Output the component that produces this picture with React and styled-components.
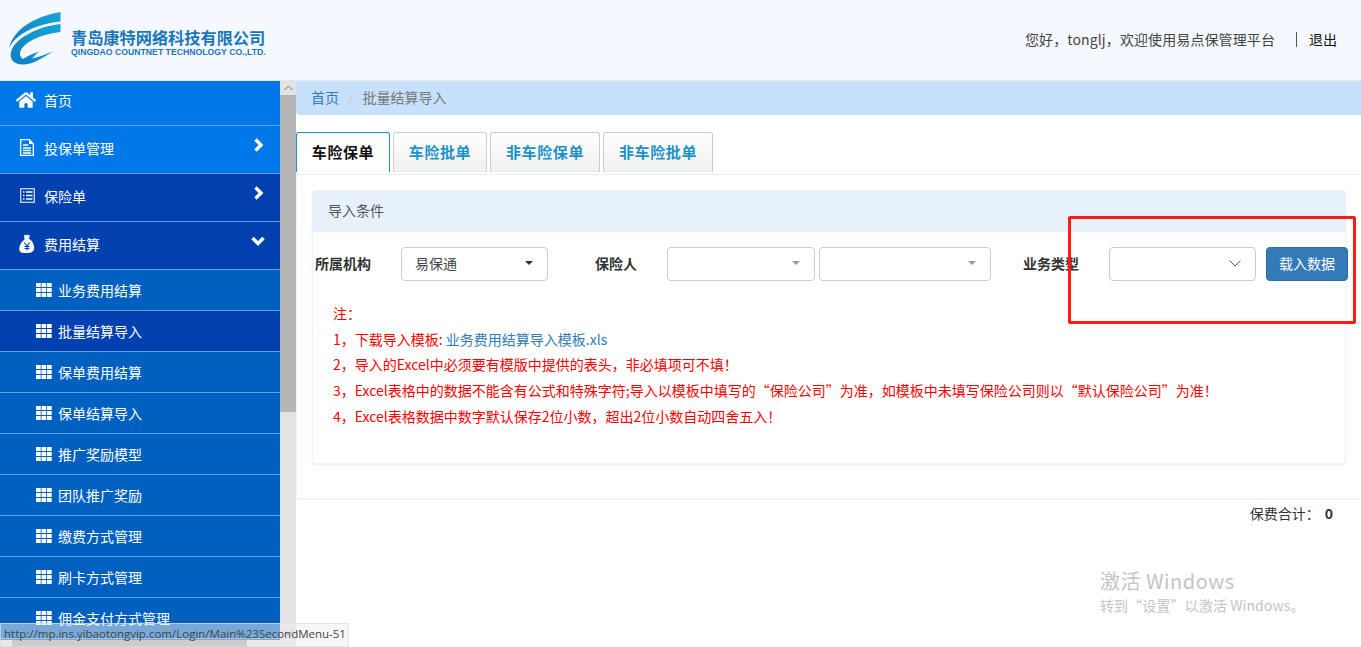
import React from 'react';
import styled, { createGlobalStyle } from 'styled-components';
import { FaHome } from 'react-icons/fa';

const GlobalStyle = createGlobalStyle`
  html, body {
    margin: 0;
    padding: 0;
    height: 100%;
    overflow: hidden;
    background: #fff;
  }
  * {
    box-sizing: border-box;
  }
  body {
    font-family: "Noto Sans CJK SC", "Open Sans", sans-serif;
    font-size: 14px;
    color: #333;
  }
`

const Page = styled.div`
  position: relative;
  width: 1361px;
  height: 647px;
  overflow: hidden;
  display: flex;
  flex-direction: column;
`

const Header = styled.header`
  flex: 0 0 81px;
  display: flex;
  align-items: center;
  justify-content: space-between;
  padding: 0 24px 2px 9px;
  background: #f5f9ff;
  border-bottom: 1px solid #e4e8ee;
`

const Brand = styled.div`
  display: flex;
  align-items: center;
  gap: 10px;
`

const BrandText = styled.div`
  display: flex;
  flex-direction: column;
  margin-top: 7px;
  color: #1a76ba;
`

const BrandName = styled.div`
  font-size: 16.2px;
  line-height: 20px;
  font-weight: 700;
  white-space: nowrap;
`

const BrandSub = styled.div`
  font-family: "Liberation Sans", sans-serif;
  font-size: 8.7px;
  line-height: 11px;
  font-weight: 700;
  white-space: nowrap;
`

const UserBar = styled.div`
  display: flex;
  align-items: center;
  font-size: 14px;
  color: #444;
`

const UserGreeting = styled.span`
  letter-spacing: .1px;
`

const Divider = styled.span`
  width: 1px;
  height: 15px;
  margin: 0 12px 0 21px;
  background: #555;
`

const Logout = styled.a`
  color: #111;
`

const Body = styled.div`
  flex: 1;
  display: flex;
  min-height: 0;
`

const SideColumn = styled.div`
  flex: 0 0 296px;
  display: flex;
  flex-direction: column;
`

const SideTop = styled.div`
  flex: 1;
  display: flex;
  min-height: 0;
`

const Sidebar = styled.nav`
  flex: 0 0 280px;
  overflow: hidden;
  background: #0060bf;
`

const MenuRow = styled.div`
  height: ${p => p.$short ? '45px' : '48px'};
  display: flex;
  align-items: center;
  padding: ${p => p.$short ? '0 0 7px 16px' : '0 0 4px 19px'};
  gap: ${p => p.$short ? '8px' : '9px'};
  color: #fff;
  font-size: 14px;
  background: ${p => p.$dark ? '#0041af' : '#0078e8'};
  border-bottom: 1px solid #5b9fe6;
`

const MenuIcon = styled.span`
  display: flex;
  width: ${p => p.$w || 16}px;
  justify-content: center;
`

const MenuLabel = styled.span`
  flex: 1;
`

const Arrow = styled.span`
  display: flex;
  width: 14px;
  justify-content: center;
  margin: 0 15px 6px 0;
`

const SubRow = styled.div`
  height: 41px;
  display: flex;
  align-items: center;
  gap: 6px;
  padding-left: 36px;
  color: #fff;
  font-size: 14px;
  background: ${p => p.$active ? '#0041af' : '#0060bf'};
  border-bottom: 1px solid #5b9fe6;
`

const ScrollTrack = styled.div`
  flex: 0 0 16px;
  display: flex;
  flex-direction: column;
  background: #e3e3e3;
`

const ScrollButton = styled.div`
  flex: 0 0 14px;
  display: flex;
  align-items: center;
  justify-content: center;
`

const ScrollThumb = styled.div`
  flex: 0 0 317px;
  background: #b6b6b6;
`

const ScrollRest = styled.div`
  flex: 1;
`

const HScroll = styled.div`
  flex: 0 0 7px;
  display: flex;
  background: #e3e3e3;
`

const HThumb = styled.div`
  width: 235px;
  margin-left: 12px;
  background: #a9a9a9;
`

const Main = styled.main`
  flex: 1;
  min-width: 0;
  display: flex;
  flex-direction: column;
`

const Breadcrumb = styled.div`
  flex: 0 0 34px;
  display: flex;
  align-items: center;
  padding: 0 15px 3px;
  background: #c7e1fd;
  border-radius: 0 0 0 4px;
  font-size: 14px;
`

const CrumbLink = styled.a`
  color: #337ab7;
`

const CrumbSep = styled.span`
  margin: 0 9px;
  color: #ccc;
`

const CrumbCurrent = styled.span`
  color: #777;
`

const Tabs = styled.div`
  display: flex;
  gap: 3px;
  margin-top: 17px;
  height: 40px;
`

const Tab = styled.div`
  width: ${p => p.$w}px;
  display: flex;
  align-items: center;
  justify-content: center;
  padding-bottom: 2px;
  font-size: 15px;
  font-weight: 700;
  letter-spacing: .6px;
  border: 1px solid ${p => p.$active ? '#1d92c8' : '#ccc'};
  border-bottom: ${p => p.$active ? '0' : '1px solid #e8e8e8'};
  border-radius: 3px 3px 0 0;
  color: ${p => p.$active ? '#111' : '#1d92c8'};
  background: ${p => p.$active ? '#fff' : 'linear-gradient(#fff, #f0f0f0)'};
`

const Panel = styled.section`
  margin-top: 2px;
  padding: 15px 15px 36px;
  height: 326px;
  border-top: 1px solid #e8f1fb;
  border-bottom: 2px solid #eef3fa;
  border-left: 1px solid #eef3fa;
`

const Card = styled.div`
  height: 274px;
  border: 1px solid #eef3fa;
  border-top: 0;
  border-radius: 4px;
  box-shadow: 0 1px 2px rgba(180, 200, 230, .3);
`

const CardTitle = styled.div`
  height: 42px;
  display: flex;
  align-items: center;
  padding: 0 0 2px 15px;
  background: #e6f1fc;
  border-radius: 4px 4px 0 0;
  font-size: 14px;
  color: #555;
`

const FormRow = styled.div`
  display: flex;
  align-items: center;
  height: 34px;
  margin: 15px -2px 0 2px;
`

const FieldLabel = styled.label`
  flex: none;
  width: ${p => p.$w}px;
  margin-left: ${p => p.$ml || 0}px;
  padding-bottom: 2px;
  font-size: 14px;
  font-weight: 700;
  color: #333;
  white-space: nowrap;
`

const Select = styled.div`
  flex: none;
  width: ${p => p.$w}px;
  height: 34px;
  margin-right: ${p => p.$mr || 0}px;
  display: flex;
  align-items: center;
  justify-content: space-between;
  padding: 0 14px 2px 13px;
  background: #fff;
  border: 1px solid #ccc;
  border-radius: 4px;
  font-size: 14px;
  color: #444;
`

const Caret = styled.span`
  width: 0;
  height: 0;
  border-left: 4px solid transparent;
  border-right: 4px solid transparent;
  border-top: 4px solid ${p => p.$dark ? '#333' : '#999'};
`

const Button = styled.button`
  flex: none;
  width: 82px;
  height: 34px;
  margin-left: 10px;
  padding: 0 0 2px;
  background: #337ab7;
  border: 1px solid #2e6da4;
  border-radius: 4px;
  color: #fff;
  font: inherit;
  font-size: 14px;
`

const Notes = styled.div`
  margin: 20px 0 0 20px;
  color: #f00;
  font-size: 14px;
  line-height: 25.7px;
  white-space: nowrap;
`

const NoteLink = styled.a`
  color: #337ab7;
`

const Totals = styled.div`
  display: flex;
  justify-content: flex-end;
  gap: 5px;
  margin-top: 3px;
  padding-right: 28px;
  font-size: 14px;
  line-height: 20px;
`

const TotalValue = styled.b`
  font-size: 14px;
`

const Highlight = styled.div`
  position: absolute;
  left: 1068px;
  top: 216px;
  width: 288px;
  height: 108px;
  border: 3px solid #ff1a12;
  border-radius: 2px;
`

const Watermark = styled.div`
  position: absolute;
  left: 1100px;
  top: 567px;
  color: #c4c4c4;
  white-space: nowrap;
`

const WatermarkTitle = styled.div`
  font-size: 20px;
  line-height: 28px;
  letter-spacing: .5px;
`

const WatermarkSub = styled.div`
  font-size: 14px;
  line-height: 20px;
  letter-spacing: .1px;
`

const StatusBar = styled.div`
  position: absolute;
  left: 0;
  bottom: 0;
  width: 349px;
  height: 24px;
  display: flex;
  align-items: center;
  padding: 0 0 3px 3px;
  background: rgba(240, 240, 240, .5);
  border: 1px solid rgba(220, 220, 220, .7);
  font-family: "Open Sans", sans-serif;
  font-size: 11.5px;
  color: #444;
  white-space: nowrap;
`

const FileIcon = () => (
  <svg width="14" height="17" viewBox="0 0 14 17" fill="none">
    <path d="M.7.7h8.6l4 4v11.600H.7z" stroke="#fff" strokeWidth="1.300" />
    <path d="M9 .7v4.400h4.300" fill="#fff" />
    <path d="M3 6h5.500M3 9h8M3 11.500h8M3 14h8" stroke="#fff" strokeWidth="1.300" />
  </svg>
)

const ListIcon = () => (
  <svg width="15" height="15" viewBox="0 0 15 15" fill="none">
    <rect x=".7" y=".7" width="13.600" height="13.600" stroke="#c8d8f0" strokeWidth="1.300" />
    <path d="M3 4h1.500M6 4h6.500M3 7.500h1.500M6 7.500h6.500M3 11h1.500M6 11h6.500" stroke="#fff" strokeWidth="1.400" />
  </svg>
)

const BagIcon = () => (
  <svg width="16" height="20" viewBox="0 0 16 20">
    <path d="M5 .5l1.500 1 1.500-1 1.500 1 1.500-1-1 4.200c3 1.800 5.200 5 5.200 9 0 3.800-2.600 5.300-7.700 5.300S.3 18.500.3 14.700c0-4 2.200-7.200 5.200-9z" fill="#fff" />
    <path d="M5.300 8.500L8 12l2.700-3.500M8 12v4.500M5.500 12.500h5M5.500 14.500h5" stroke="#0041af" strokeWidth="1.100" fill="none" />
  </svg>
)

const GridIcon = () => (
  <svg width="16" height="14" viewBox="0 0 16 14" fill="#fff">
    {[0, 5, 10].map(y => [0, 5.500, 11].map(x => (
      <rect key={`${x}-${y}`} x={x} y={y} width="4.700" height="4" />
    )))}
  </svg>
)

const ChevronRight = () => (
  <svg width="11" height="14" viewBox="0 0 11 14" fill="none">
    <path d="M2.500 1.500L8 7l-5.500 5.500" stroke="#fff" strokeWidth="3.400" />
  </svg>
)

const ChevronDown = () => (
  <svg width="14" height="10" viewBox="0 0 14 10" fill="none">
    <path d="M1.500 2L7 7.500 12.500 2" stroke="#fff" strokeWidth="3.400" />
  </svg>
)

const Logo = () => (
  <svg width="52" height="54" viewBox="0 0 52 54">
    <defs>
      <linearGradient id="logoBand" x1="0" y1="1" x2="1" y2="0">
        <stop offset="0" stopColor="#0d7fc2" />
        <stop offset="1" stopColor="#16a5d8" />
      </linearGradient>
    </defs>
    <path d="M51.500 0C33 3 6 13 0 36 7 22 27 12 51.500 9.500z" fill="url(#logoBand)" />
    <path d="M51.500 12C32 14 6 25 2 40 0 49 7 53 15 52.500 25 52 33 46 44 39.500 37 42 30 45 23 46.500 26 43 28 41 31 39.500 24 41 19 44 14 47 11 45 10 42 12 38 17 29 33 22 51.500 20z" fill="url(#logoBand)" />
  </svg>
)

const ScrollUp = () => (
  <svg width="9" height="6" viewBox="0 0 9 6" fill="none">
    <path d="M.5 5L4.500 1l4 4" stroke="#777" />
  </svg>
)

const ScrollDown = () => (
  <svg width="9" height="6" viewBox="0 0 9 6" fill="none">
    <path d="M.5 1L4.500 5l4-4" stroke="#777" />
  </svg>
)

const SelectChevron = () => (
  <svg width="12" height="7" viewBox="0 0 12 7" fill="none">
    <path d="M.5.5L6 6 11.500.5" stroke="#555" />
  </svg>
)

const subMenus = [
  '业务费用结算', '批量结算导入', '保单费用结算', '保单结算导入', '推广奖励模型',
  '团队推广奖励', '缴费方式管理', '刷卡方式管理', '佣金支付方式管理',
];

const tabs = [
  { label: '车险保单', w: 94 },
  { label: '车险批单', w: 94 },
  { label: '非车险保单', w: 110 },
  { label: '非车险批单', w: 110 },
];

const App = () => {
  return (
    <Page>
      <GlobalStyle />
      <Header>
        <Brand>
          <Logo />
          <BrandText>
            <BrandName>青岛康特网络科技有限公司</BrandName>
            <BrandSub>QINGDAO COUNTNET TECHNOLOGY CO.,LTD.</BrandSub>
          </BrandText>
        </Brand>
        <UserBar>
          <UserGreeting>您好，tonglj，欢迎使用易点保管理平台</UserGreeting>
          <Divider />
          <Logout>退出</Logout>
        </UserBar>
      </Header>
      <Body>
        <SideColumn>
          <SideTop>
            <Sidebar>
              <MenuRow $short>
                <MenuIcon $w={20}><FaHome size={20} /></MenuIcon>
                <MenuLabel>首页</MenuLabel>
              </MenuRow>
              <MenuRow>
                <MenuIcon><FileIcon /></MenuIcon>
                <MenuLabel>投保单管理</MenuLabel>
                <Arrow><ChevronRight /></Arrow>
              </MenuRow>
              <MenuRow $dark>
                <MenuIcon><ListIcon /></MenuIcon>
                <MenuLabel>保险单</MenuLabel>
                <Arrow><ChevronRight /></Arrow>
              </MenuRow>
              <MenuRow $dark>
                <MenuIcon><BagIcon /></MenuIcon>
                <MenuLabel>费用结算</MenuLabel>
                <Arrow><ChevronDown /></Arrow>
              </MenuRow>
              {subMenus.map((name, i) => (
                <SubRow key={name} $active={i === 1}>
                  <GridIcon />
                  <span>{name}</span>
                </SubRow>
              ))}
            </Sidebar>
            <ScrollTrack>
              <ScrollButton><ScrollUp /></ScrollButton>
              <ScrollThumb />
              <ScrollRest />
              <ScrollButton><ScrollDown /></ScrollButton>
            </ScrollTrack>
          </SideTop>
          <HScroll>
            <HThumb />
          </HScroll>
        </SideColumn>
        <Main>
          <Breadcrumb>
            <CrumbLink>首页</CrumbLink>
            <CrumbSep>/</CrumbSep>
            <CrumbCurrent>批量结算导入</CrumbCurrent>
          </Breadcrumb>
          <Tabs>
            {tabs.map((t, i) => (
              <Tab key={t.label} $w={t.w} $active={i === 0}>{t.label}</Tab>
            ))}
          </Tabs>
          <Panel>
            <Card>
              <CardTitle>导入条件</CardTitle>
              <FormRow>
                <FieldLabel $w={86}>所属机构</FieldLabel>
                <Select $w={147}>易保通<Caret $dark /></Select>
                <FieldLabel $w={72} $ml={47}>保险人</FieldLabel>
                <Select $w={148} $mr={4}><span /><Caret /></Select>
                <Select $w={172}><span /><Caret /></Select>
                <FieldLabel $w={86} $ml={32}>业务类型</FieldLabel>
                <Select $w={147}><span /><SelectChevron /></Select>
                <Button>载入数据</Button>
              </FormRow>
              <Notes>
                <div>注：</div>
                <div>1，下载导入模板: <NoteLink>业务费用结算导入模板.xls</NoteLink></div>
                <div>2，导入的Excel中必须要有模版中提供的表头，非必填项可不填！</div>
                <div>3，Excel表格中的数据不能含有公式和特殊字符;导入以模板中填写的“保险公司”为准，如模板中未填写保险公司则以“默认保险公司”为准！</div>
                <div>4，Excel表格数据中数字默认保存2位小数，超出2位小数自动四舍五入！</div>
              </Notes>
            </Card>
          </Panel>
          <Totals>
            <span>保费合计：</span>
            <TotalValue>0</TotalValue>
          </Totals>
        </Main>
      </Body>
      <Highlight />
      <Watermark>
        <WatermarkTitle>激活 Windows</WatermarkTitle>
        <WatermarkSub>转到“设置”以激活 Windows。</WatermarkSub>
      </Watermark>
      <StatusBar>http://mp.ins.yibaotongvip.com/Login/Main%23SecondMenu-51</StatusBar>
    </Page>
  );
};

export default App;
